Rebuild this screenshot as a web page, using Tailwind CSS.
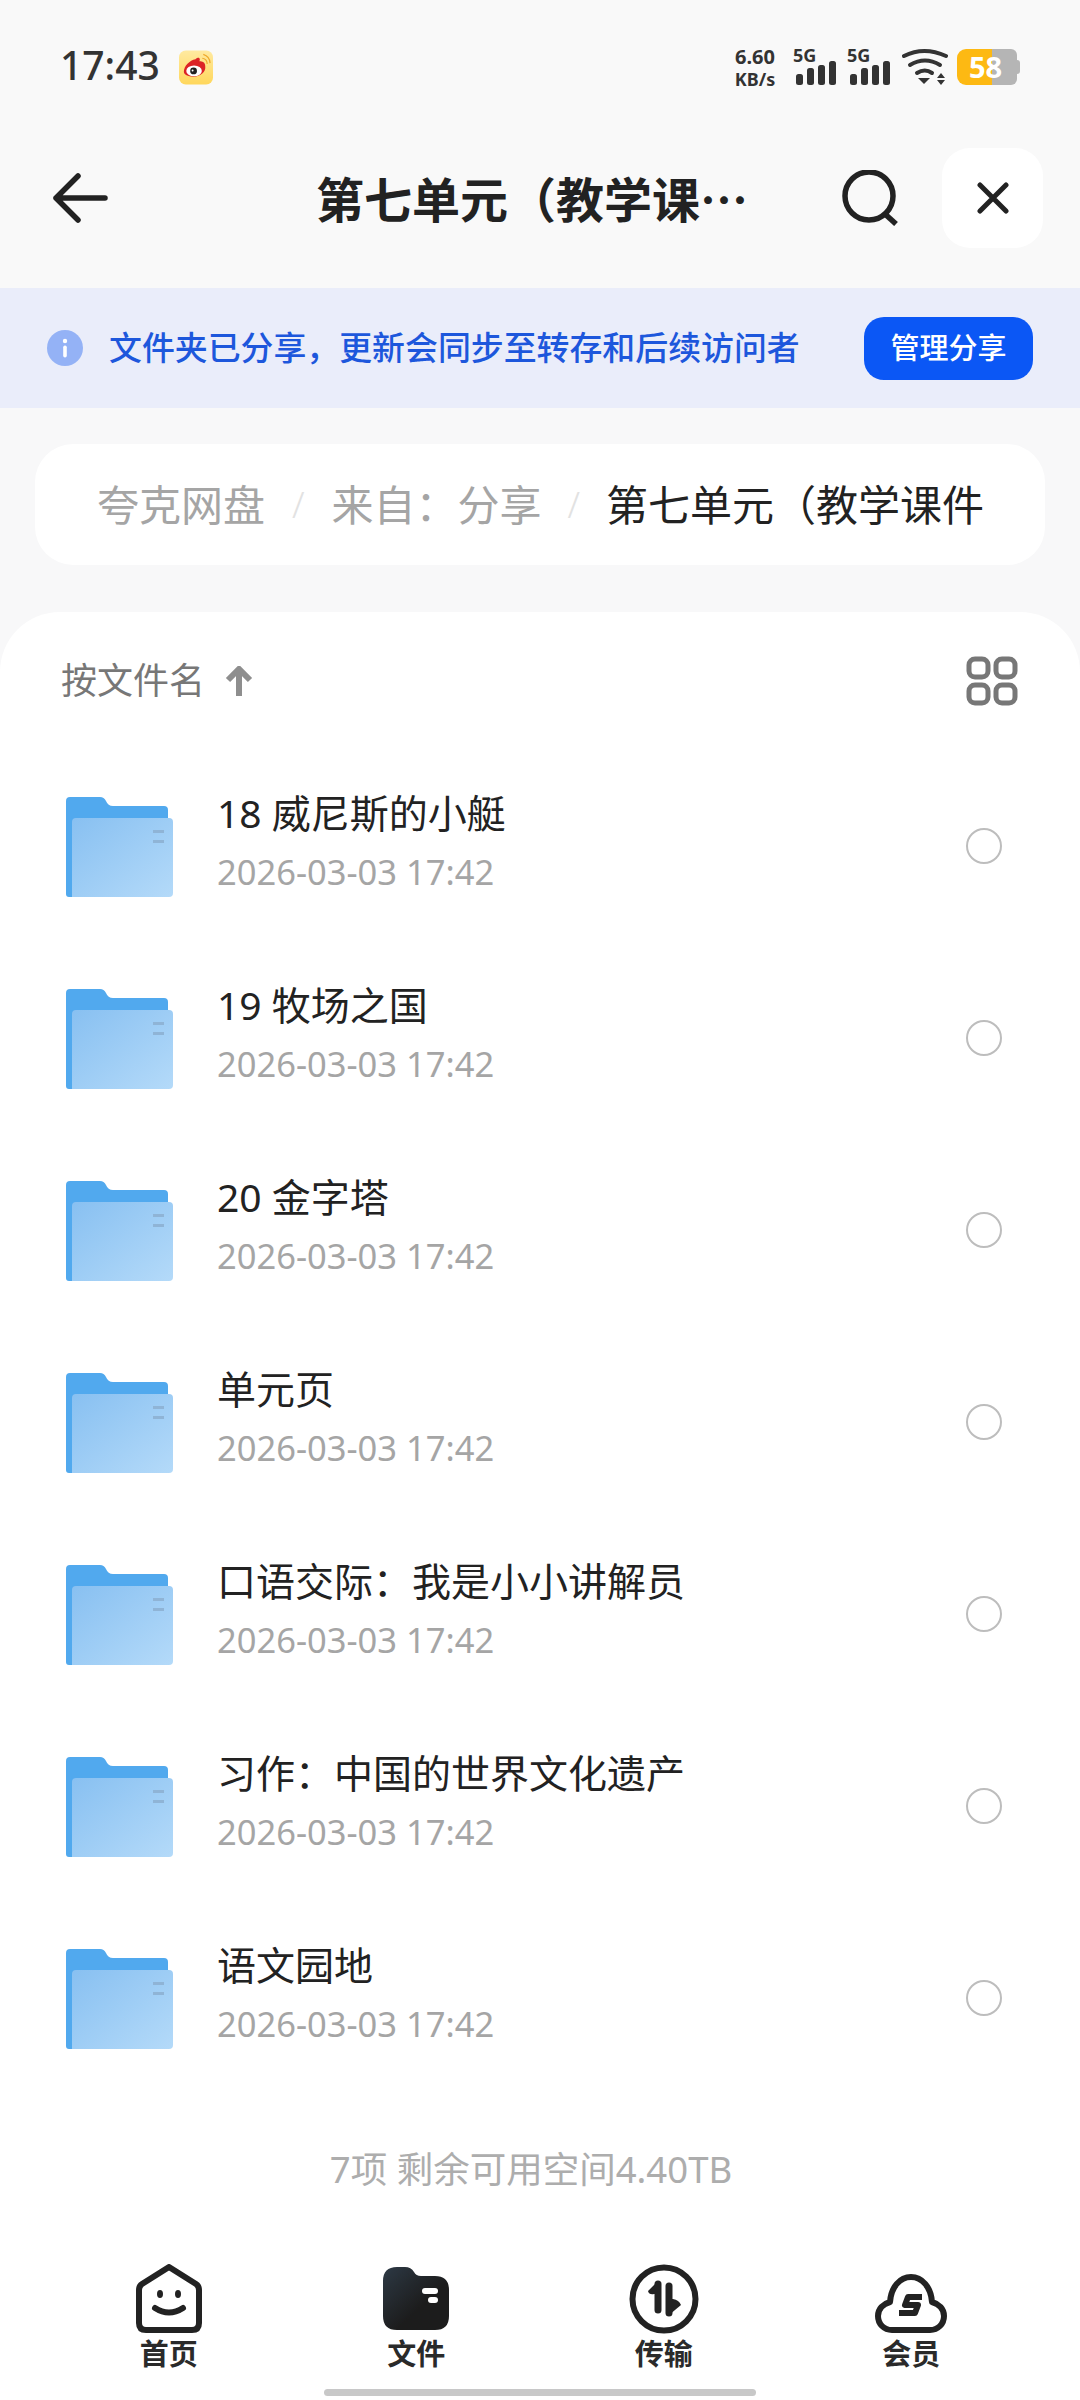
<!DOCTYPE html>
<html lang="zh-CN">
<head>
  <meta charset="UTF-8">
  <meta name="viewport" content="width=device-width, initial-scale=1.0">
  <title>第七单元</title>
  <script src="https://cdn.jsdelivr.net/npm/@tailwindcss/browser@4"></script>
</head>
<body class="bg-[#f8f8f9] font-['Noto_Sans','Noto_Sans_CJK_SC',sans-serif]">
<div class="relative flex flex-col w-[1080px] h-[2400px] overflow-hidden">

  <!-- status bar -->
  <div class="flex items-center justify-between h-[134px] pl-[60px] pr-[60px] bg-[#f9f9f9]">
    <div class="flex items-center gap-[19px]">
      <span class="pb-[4px] text-[39px] font-medium text-[#333]">17:43</span>
      <svg class="w-[34px] h-[35px]" viewBox="0 0 35 35">
        <defs><linearGradient id="wb" x1="0" y1="0" x2="0" y2="1"><stop offset="0" stop-color="#ffeaa0"/><stop offset="1" stop-color="#ffd75c"/></linearGradient></defs>
        <rect width="35" height="35" rx="7" fill="url(#wb)"/>
        <path d="M5 22c0-6 6-12 12-13 1-1 3-2 4-1 1 1 0 3 0 3 3 0 6 1 6 5 1 6-5 11-12 11-6 0-10-2-10-5z" fill="#dc2326"/>
        <ellipse cx="15.500" cy="21" rx="8" ry="5.500" fill="#fff"/>
        <circle cx="15" cy="21" r="3.500" fill="#222"/>
        <circle cx="14" cy="20.500" r="1" fill="#fff"/>
        <path d="M24 8a6 6 0 0 1 5 6M25 4a10 10 0 0 1 7 9" fill="none" stroke="#eea92c" stroke-width="1.200"/>
      </svg>
    </div>
    <div class="flex items-center h-[37px]">
      <div class="flex flex-col items-center font-bold text-[#333] leading-none w-[48px]">
        <span class="text-[20px]">6.60</span>
        <span class="text-[18px] mt-[3px]">KB/s</span>
      </div>
      <svg class="w-[44px] h-[38px] ml-[14px] overflow-visible" viewBox="0 0 44 38" fill="#333">
        <text x="0" y="14" font-size="18" font-weight="700" font-family="Noto Sans">5G</text>
        <rect x="3" y="26" width="7" height="11" rx="2.500"/><rect x="14" y="20" width="7" height="17" rx="2.500"/><rect x="25" y="17" width="7" height="20" rx="2.500"/><rect x="36" y="13" width="7" height="24" rx="2.500"/>
      </svg>
      <svg class="w-[44px] h-[38px] ml-[10px] overflow-visible" viewBox="0 0 44 38" fill="#333">
        <text x="0" y="14" font-size="18" font-weight="700" font-family="Noto Sans">5G</text>
        <rect x="3" y="26" width="7" height="11" rx="2.500"/><rect x="14" y="20" width="7" height="17" rx="2.500"/><rect x="25" y="17" width="7" height="20" rx="2.500"/><rect x="36" y="13" width="7" height="24" rx="2.500"/>
      </svg>
      <svg class="w-[46px] h-[38px] ml-[11px]" viewBox="0 0 46 38" fill="none" stroke="#333" stroke-width="4" stroke-linecap="round">
        <path d="M2 8Q22 -2 44 8"/>
        <path d="M8 17Q23 8 38 17"/>
        <path d="M15 25Q23 20 30 25"/>
        <path d="M16 30H28L22 36Z" fill="#333" stroke="none"/>
        <path d="M35 30H43L39 25ZM35 32H43L39 37Z" fill="#333" stroke="none"/>
      </svg>
      <div class="relative flex w-[63px] h-[36px] ml-[9px]">
        <div class="w-[35px] h-full bg-[#fdb913] rounded-l-[9px]"></div>
        <div class="w-[25px] h-full bg-[#b5b5b5] rounded-r-[6px]"></div>
        <div class="w-[3px] h-[14px] mt-[11px] bg-[#b5b5b5] rounded-r-[3px]"></div>
        <span class="absolute left-[12px] top-0 text-[29px] leading-[36px] font-bold text-white">58</span>
      </div>
    </div>
  </div>

  <!-- header -->
  <div class="relative flex items-center justify-between h-[154px] pb-[26px] pl-[53px] pr-[37px] bg-[#f9f9f9]">
    <svg class="w-[55px] h-[50px]" viewBox="0 0 55 50" fill="none" stroke="#222" stroke-width="5.500" stroke-linecap="round" stroke-linejoin="round">
      <path d="M25 3L3 25l22 22M3 25h49"/>
    </svg>
    <h1 class="absolute left-[316px] top-[30px] font-['Noto_Sans_CJK_SC',sans-serif] text-[48px] leading-[66px] font-bold text-[#222] whitespace-nowrap">第七单元（教学课…</h1>
    <div class="flex items-center gap-[44px]">
      <svg class="w-[56px] h-[56px]" viewBox="0 0 56 56" fill="none" stroke="#222" stroke-width="5.500">
        <circle cx="27" cy="26" r="24"/>
        <path d="M43 44l11 10"/>
      </svg>
      <div class="flex items-center justify-center w-[101px] h-[100px] bg-white rounded-[28px]">
        <svg class="w-[32px] h-[32px]" viewBox="0 0 32 32" fill="none" stroke="#222" stroke-width="5" stroke-linecap="round">
          <path d="M3 3l26 26M29 3L3 29"/>
        </svg>
      </div>
    </div>
  </div>

  <!-- share notice -->
  <div class="flex items-center justify-between h-[120px] pl-[47px] pr-[47px] bg-[#eaedfa]">
    <div class="flex items-center gap-[26px]">
      <svg class="w-[36px] h-[36px]" viewBox="0 0 36 36">
        <circle cx="18" cy="18" r="18" fill="#94b2f6"/>
        <circle cx="18" cy="11" r="2.200" fill="#fff"/>
        <rect x="16.200" y="15.500" width="3.600" height="12" rx="1.800" fill="#fff"/>
      </svg>
      <span class="text-[32.900px] font-medium text-[#1d57dc] whitespace-nowrap">文件夹已分享，更新会同步至转存和后续访问者</span>
    </div>
    <button class="flex items-center justify-center w-[169px] h-[63px] bg-[#0b57f5] rounded-[20px] text-[29px] font-medium text-white">管理分享</button>
  </div>

  <!-- breadcrumb -->
  <div class="flex items-center h-[121px] mt-[36px] mx-[35px] pl-[62px] bg-white rounded-[38px] text-[42px] whitespace-nowrap">
    <span class="text-[#a5a5a5]">夸克网盘</span>
    <span class="mx-[27px] text-[#e2e2e2] font-light text-[36px]">/</span>
    <span class="text-[#a5a5a5]">来自：分享</span>
    <span class="mx-[26px] text-[#e2e2e2] font-light text-[36px]">/</span>
    <span class="text-[#222]">第七单元（教学课件</span>
  </div>

  <!-- file sheet -->
  <div class="flex flex-col flex-1 mt-[47px] bg-white rounded-t-[60px]">
    <div class="flex items-center justify-between h-[138px] pl-[61px] pr-[62px]">
      <div class="flex items-center gap-[20px]">
        <span class="text-[36px] text-[#777]">按文件名</span>
        <svg class="w-[28px] h-[30px]" viewBox="0 0 28 30" fill="none" stroke="#8e8e8e" stroke-width="6">
          <path d="M14 30V4M3 14L14 3l11 11"/>
        </svg>
      </div>
      <svg class="w-[52px] h-[50px]" viewBox="0 0 52 50" fill="none" stroke="#777" stroke-width="5">
        <rect x="3" y="3" width="19" height="18" rx="6"/><rect x="30" y="3" width="19" height="18" rx="6"/>
        <rect x="3" y="29" width="19" height="18" rx="6"/><rect x="30" y="29" width="19" height="18" rx="6"/>
      </svg>
    </div>

    <div id="fileList" class="flex flex-col"></div>

    <p class="mt-[48px] pr-[18px] text-center text-[36.500px] text-[#adadad]">7项 剩余可用空间4.40TB</p>

    <!-- bottom nav -->
    <nav class="grid grid-cols-4 mt-[67px] px-[45px] text-[29px] font-bold text-[#2a2a2a]">
      <div class="flex flex-col items-center">
        <svg class="w-[66px] h-[70px]" viewBox="0 0 66 70" fill="none" stroke="#222" stroke-width="6" stroke-linejoin="round" stroke-linecap="round">
          <path d="M33 3L60 20Q63 22 63 26V59Q63 66 56 66H10Q3 66 3 59V26Q3 22 6 20Z"/>
          <ellipse cx="24" cy="30" rx="2" ry="3" fill="#222" stroke-width="2"/>
          <ellipse cx="42" cy="30" rx="2" ry="3" fill="#222" stroke-width="2"/>
          <path d="M19 44Q33 53 47 44"/>
        </svg>
        <span class="leading-[40px]">首页</span>
      </div>
      <div class="flex flex-col items-center">
        <svg class="w-[66px] h-[70px]" viewBox="0 0 66 70">
          <defs><linearGradient id="navFolder" x1="0" y1="0" x2="0.600" y2="0.600"><stop offset="0" stop-color="#2d3945"/><stop offset="1" stop-color="#1c1c1c"/></linearGradient></defs>
          <path d="M14 3H22Q28 3 31 8Q33 12 38 12H52Q66 12 66 26V52Q66 66 52 66H14Q0 66 0 52V17Q0 3 14 3Z" fill="url(#navFolder)"/>
          <rect x="39" y="24" width="16" height="6" rx="3" fill="#fff"/>
          <rect x="45" y="33" width="10" height="6" rx="3" fill="#fff"/>
        </svg>
        <span class="leading-[40px]">文件</span>
      </div>
      <div class="flex flex-col items-center">
        <svg class="w-[70px] h-[70px]" viewBox="0 0 70 70" fill="none" stroke="#222" stroke-width="6">
          <circle cx="35" cy="35" r="31.500"/>
          <path d="M29 20V46" stroke-width="7" stroke-linecap="round"/>
          <path d="M29 17L19 27Q20 31 25 30H29Z" fill="#222" stroke="none"/>
          <path d="M40 22V49" stroke-width="7" stroke-linecap="round"/>
          <path d="M40 51L52 41Q50 36 44 35H40Z" fill="#222" stroke="none"/>
        </svg>
        <span class="leading-[40px]">传输</span>
      </div>
      <div class="flex flex-col items-center">
        <svg class="w-[72px] h-[70px]" viewBox="0 0 72 70" fill="none" stroke="#222" stroke-width="6" stroke-linejoin="round">
          <path d="M17 66H55C63 66 69 60 69 52C69 45 64 40 57 38C56 23 47 13 36 13C25 13 16 23 15 38C8 40 3 45 3 52C3 60 9 66 17 66Z"/>
          <path d="M47 33H33L30 41H43L40 49H24" stroke-width="6"/>
        </svg>
        <span class="leading-[40px]">会员</span>
      </div>
    </nav>
  </div>

  <!-- gesture bar -->
  <div class="absolute left-[324px] bottom-[4px] w-[432px] h-[7px] bg-[#c8c8c8] rounded-full"></div>
</div>

<script>
  const folders = ['18 威尼斯的小艇', '19 牧场之国', '20 金字塔', '单元页', '口语交际：我是小小讲解员', '习作：中国的世界文化遗产', '语文园地'];

  document.getElementById('fileList').innerHTML = folders.map((name, i) => `
    <div class="flex items-center h-[192px] pl-[66px] pr-[78px]">
      <svg class="w-[108px] h-[101px] shrink-0" viewBox="0 0 108 101">
        <defs><linearGradient id="front${i}" x1="0" y1="0" x2="1" y2="1"><stop offset="0" stop-color="#88c0f1"/><stop offset="1" stop-color="#b4daf9"/></linearGradient></defs>
        <path d="M0 5Q0 1 4 1H34Q38 1 40 5Q42 10 47 10H98Q102 10 102 14V101H3Q0 101 0 98Z" fill="#51a9ee"/>
        <path d="M6 26Q6 22 10 22H103Q107 22 107 26V97Q107 101 103 101H6Z" fill="url(#front${i})"/>
        <rect x="87" y="34" width="11" height="3" fill="#8fb4d6"/>
        <rect x="87" y="44" width="11" height="3" fill="#8fb4d6"/>
      </svg>
      <div class="flex flex-col flex-1 ml-[43px] pb-[9px]">
        <span class="text-[39px] leading-[50px] text-[#222]">${name}</span>
        <span class="mt-[11px] text-[34.500px] leading-[46px] text-[#a5a5a5]">2026-03-03 17:42</span>
      </div>
      <div class="w-[36px] h-[36px] rounded-full border-[2.500px] border-[#bdbdbd]"></div>
    </div>
  `).join('');
</script>
</body>
</html>
